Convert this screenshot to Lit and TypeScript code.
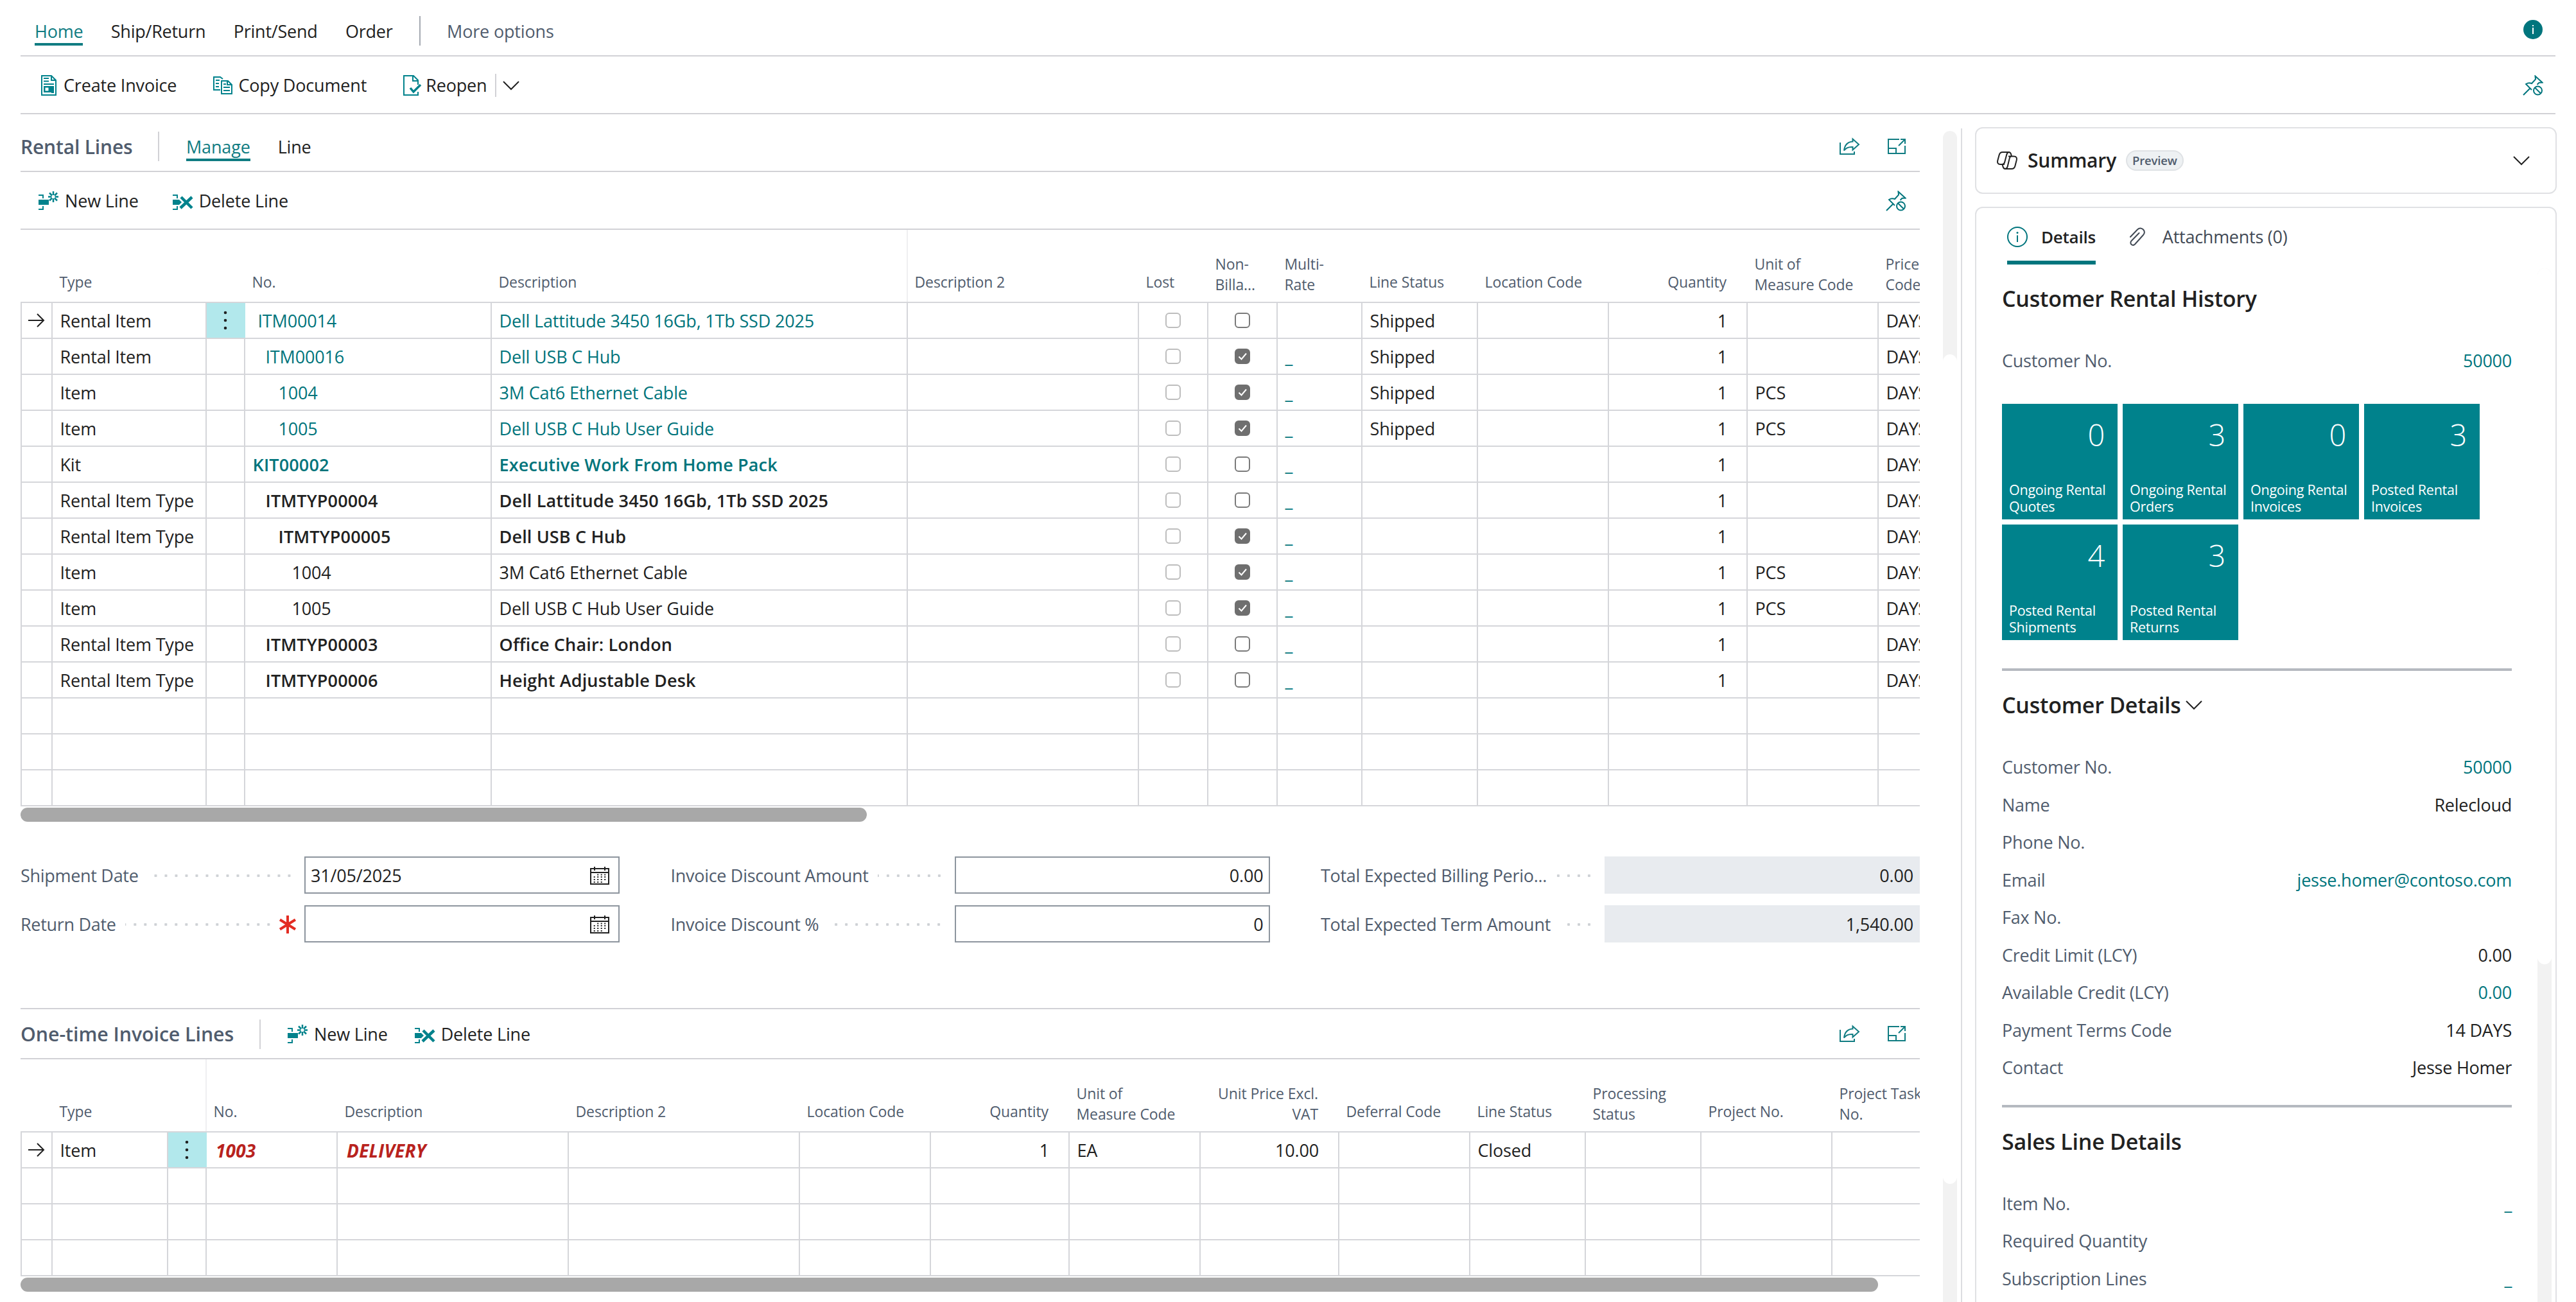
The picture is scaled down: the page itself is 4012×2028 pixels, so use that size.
import {LitElement, css, html, nothing, svg} from 'lit';
import type {TemplateResult} from 'lit';
import {customElement, property} from 'lit/decorators.js';
import {classMap} from 'lit/directives/class-map.js';

interface Column {
  title: string;
  right?: boolean;
  frozen?: boolean;
}

interface RentalLine {
  type: string;
  no: string;
  indent: number;
  description: string;
  link?: boolean;
  bold?: boolean;
  nonBillable?: boolean;
  multiRate?: boolean;
  status?: string;
  unit?: string;
}

interface Fact {
  label: string;
  value?: string;
  link?: boolean;
}

const icons: Record<string, TemplateResult> = {
  invoice: html`<svg width="26" height="32" viewBox="0 0 26 32" fill="none" stroke="currentColor" stroke-width="2">
    <path d="M1 1h15l7 7v23H1z M16 1v7h7 M4 5h8 M4 9.500h8 M4 14h16" />
    <path d="M4 17h16v11h-4v-1H4z" fill="currentColor" stroke="none" /><path d="M6.500 19.500h5v5h-5z" fill="#fff" stroke="none" />
  </svg>`,
  copy: html`<svg width="30" height="28" viewBox="0 0 30 28" fill="none" stroke="currentColor" stroke-width="2">
    <path d="M11 21H1V1h10l4 3 M4 6h6 M4 11h5 M4 16h5 M13 7h10l6 6v14H13z M22 7v6h7 M16 12h4 M16 17h10 M16 22h10" />
  </svg>`,
  reopen: html`<svg width="26" height="32" viewBox="0 0 26 32" overflow="visible" fill="none" stroke="currentColor" stroke-width="2">
    <path d="M23 15V8l-7-7H1v30h22v-5 M15 1v8h8" /><path d="M11 20l5 6L27 15" stroke-width="3.500" />
  </svg>`,
  newLine: html`<svg width="32" height="28" viewBox="0 0 32 28" overflow="visible" fill="none" stroke="currentColor" stroke-width="2">
    <path d="M0 5h7v5 M0 27h7v-5" /><path d="M0 12h16v8H0z" fill="currentColor" stroke="none" />
    <path d="M23 -1v6 M23 10v6 M15 7.500h5.500 M25.500 7.500h5.500 M17 1.500l4 4 M29 1.500l-4 4 M17 13.500l4-4 M29 13.500l-4-4" stroke-width="2.500" />
  </svg>`,
  deleteLine: html`<svg width="32" height="28" viewBox="0 0 32 28" fill="none" stroke="currentColor" stroke-width="2">
    <path d="M0 5h7v5 M0 27h7v-5" /><path d="M0 12h10l4 4-4 4H0z" fill="currentColor" stroke="none" />
    <path d="M13 8l17 17 M30 8L12 25" stroke-width="4.500" />
  </svg>`,
  share: html`<svg width="32" height="28" viewBox="0 0 32 28" fill="none" stroke="currentColor" stroke-width="2">
    <path d="M1 8v18h22v-4" /><path d="M20.500 2.500L30 11l-9.500 8.500V15C14 14.500 10 16 7 20.500 8 12 12.500 7 20.500 6.500z" />
  </svg>`,
  expand: html`<svg width="28" height="24" viewBox="0 0 28 24" fill="none" stroke="currentColor" stroke-width="2">
    <path d="M18 1H1v22h26V11 M1 15h12v8 M17 11L26.500 1.500 M20 1h7v7" />
  </svg>`,
  unpin: html`<svg width="32" height="32" viewBox="0 0 32 32" fill="none" stroke="currentColor" stroke-width="2">
    <path d="M1 31l10.500-10.500 M14 23l-9-9c3-2 6-2 9-1l6-6.500-.5-5L30.500 11.500l-5 .2-3 3" />
    <circle cx="23.500" cy="24" r="6.500" /><path d="M19 19.500l9 9" />
  </svg>`,
  info: html`<svg width="32" height="32" viewBox="0 0 32 32" fill="none" stroke="currentColor" stroke-width="2">
    <circle cx="16" cy="16" r="15" /><path d="M16 13.500v10.500" /><circle cx="16" cy="9.500" r="1.500" fill="currentColor" stroke="none" />
  </svg>`,
  infoFilled: html`<svg width="30" height="30" viewBox="0 0 30 30">
    <circle cx="15" cy="15" r="15" fill="currentColor" /><path d="M14 12h2v10h-2z M14 8h2v2h-2z" fill="#fff" />
  </svg>`,
  clip: html`<svg width="28" height="30" viewBox="0 0 28 30" fill="none" stroke="currentColor" stroke-width="2" stroke-linecap="round">
    <path d="M2 15L13 3.500c3-3 6.500-2.500 9 0s2.500 6 0 8.500L9 26.500c-1.800 1.800-4 1.500-5.500.2s-1.600-4 .2-5.700L15.500 9" />
  </svg>`,
  copilot: html`<svg width="32" height="28" viewBox="0 0 32 28" fill="none" stroke="currentColor" stroke-width="2" stroke-linejoin="round">
    <path d="M12 20H5.500C1.500 20 .5 17.500 1.300 14L3.600 5.500C4.300 2.700 6 1 9 1h10c-2 0-3 1-3.700 3.800L12.200 16.500C11.600 19 10.500 20 8.500 20" />
    <path d="M18 7.500h8.500c4 0 5 2.500 4.200 6L28.400 22.500C27.700 25.300 26 27 23 27H13c2 0 3-1 3.700-3.800L19.500 11.500C20 9 21 7.500 23 7.500" />
    <path d="M18.500 1c2 0 3 1 3.600 3.200L23 7.500 M8.500 20l1 3.500C10.100 26 11.200 27 13 27" />
  </svg>`,
  calendar: html`<svg width="30" height="28" viewBox="0 0 30 28" fill="none" stroke="currentColor" stroke-width="2">
    <path d="M1 3h28v24H1z M1 9h28 M7 0v6 M23 0v6" />
    <path d="M11.200 12.500h14 M5.700 16h20 M5.700 20h20 M5.700 24h14" stroke-dasharray="2 3.500" />
  </svg>`,
  chevron: html`<svg width="26" height="16" viewBox="0 0 26 16" fill="none" stroke="currentColor" stroke-width="2">
    <path d="M1 2l12 12L25 2" />
  </svg>`,
  arrow: html`<svg width="26" height="22" viewBox="0 0 26 22" fill="none" stroke="currentColor" stroke-width="2">
    <path d="M0 11h24 M14 1l10 10-10 10" />
  </svg>`,
  more: html`<svg width="6" height="30" viewBox="0 0 6 30" fill="currentColor">
    ${[3, 15, 27].map(y => svg`<circle cx="3" cy=${y} r="2.300" />`)}
  </svg>`,
  required: html`<svg width="28" height="28" viewBox="0 0 28 28" fill="none" stroke="#e32c22" stroke-width="4">
    <path d="M14 0v28 M2 6.500l24 15 M26 6.500l-24 15" />
  </svg>`
};

const shared = css`
  * {
    box-sizing: border-box;
  }
  svg {
    display: block;
    flex: none;
  }
  .teal {
    color: #00757d;
  }
`;

@customElement('bc-check')
export class Check extends LitElement {
  static styles = css`
    :host {
      display: block;
    }
    .box {
      display: flex;
      box-sizing: border-box;
      width: 24px;
      height: 24px;
      border: 2px solid #7a7a7a;
      border-radius: 6px;
    }
    .dim {
      border-color: #bdbdbd;
    }
    .on {
      background: #6f6f6f;
      border-color: #6f6f6f;
    }
    svg {
      display: block;
      flex: none;
    }
  `;

  @property({type: Boolean})
  checked = false;

  @property({type: Boolean})
  dim = false;

  render() {
    return html`<span class=${classMap({box: true, on: this.checked, dim: this.dim})}>
      ${this.checked
        ? html`<svg width="20" height="20" viewBox="0 0 20 20" fill="none" stroke="#fff" stroke-width="2"><path d="M4.500 10.500l4 4 7.500-9" /></svg>`
        : nothing}</span>`;
  }
}

@customElement('bc-field')
export class Field extends LitElement {
  static styles = [
    shared,
    css`
      :host {
        display: flex;
        align-items: center;
        height: 58px;
      }
      .label {
        display: flex;
        align-items: center;
        width: 442px;
        padding: 2px 16px 0 0;
        color: #505c6d;
        letter-spacing: -0.3px;
      }
      .text {
        max-width: 380px;
        overflow: hidden;
        text-overflow: ellipsis;
        white-space: nowrap;
      }
      .dots {
        flex: 1;
        height: 4px;
        margin-left: 14px;
        background: radial-gradient(circle at center, #cfd2d6 2px, transparent 2.500px) right center / 16px 4px repeat-x;
      }
      .star {
        margin: 0 -4px 0 8px;
      }
      .input {
        display: flex;
        flex: 1;
        align-items: center;
        justify-content: space-between;
        height: 58px;
        padding: 2px 14px 0 8px;
        border: 2px solid #8d959e;
        color: #212121;
      }
      .amount {
        justify-content: flex-end;
        padding-right: 8px;
      }
      .readonly {
        border-color: #e8ebef;
        background: #e8ebef;
      }
    `
  ];

  @property()
  label = '';

  @property()
  value = '';

  @property()
  kind = 'amount';

  @property({type: Boolean})
  required = false;

  render() {
    return html`
      <div class="label">
        <span class="text">${this.label}</span><span class="dots"></span>
        ${this.required ? html`<span class="star">${icons.required}</span>` : nothing}
      </div>
      <div class=${classMap({input: true, amount: this.kind !== 'date', readonly: this.kind === 'total'})}>
        <span>${this.value}</span>${this.kind === 'date' ? icons.calendar : nothing}
      </div>
    `;
  }
}

@customElement('app-root')
export class App extends LitElement {
  static styles = [
    shared,
    css`
      :host {
        display: block;
        width: 4012px;
        height: 2028px;
        overflow: hidden;
        background: #fff;
        color: #212121;
        font: 27px/36px 'Open Sans', 'Noto Sans', sans-serif;
        letter-spacing: -0.17px;
      }
      .bar {
        display: flex;
        margin: 0 32px;
        border-bottom: 2px solid #d2d2d6;
      }
      .menu {
        align-items: flex-start;
        height: 88px;
        padding: 31px 20px 0 22px;
      }
      .tab {
        height: 40px;
        margin-right: 43px;
      }
      .menu .tab {
        margin-right: 43.500px;
        letter-spacing: -0.25px;
      }
      .tab.current {
        border-bottom: 4px solid #107c82;
        color: #107c82;
      }
      .sep {
        width: 2px;
        height: 46px;
        background: #d2d2d6;
      }
      .menu .sep {
        margin: -6px 41px 0 -2px;
        background: #a5aab2;
      }
      .options {
        color: #505c6d;
      }
      .push {
        margin-left: auto;
      }
      .actions {
        align-items: center;
        height: 90px;
        padding: 2px 19px 0 32px;
      }
      .action {
        display: flex;
        align-items: center;
        margin-right: 57px;
      }
      .action svg {
        margin-right: 9px;
        color: #00828c;
      }
      .actions .sep {
        height: 36px;
        margin: 0 10px 0 -44px;
      }
      .body {
        display: flex;
        height: 1850px;
        padding-left: 32px;
      }
      .main {
        width: 2958px;
      }
      .main .bar {
        margin: 0;
      }
      .head {
        align-items: flex-start;
        height: 90px;
        padding-top: 33px;
      }
      .title {
        width: 174px;
        color: #505c6d;
        font-size: 30px;
        font-weight: 600;
        white-space: nowrap;
      }
      .head .sep {
        margin: -6px 42px 0 40px;
      }
      .tools {
        display: flex;
        gap: 43px;
        align-items: center;
        height: 36px;
        margin: -1px 22px 0 auto;
        color: #107c82;
      }
      .lineActions {
        align-items: center;
        height: 90px;
        padding: 2px 21px 0 28px;
      }
      .lineActions .action {
        margin-right: 53px;
      }
      .invoiceHead .action {
        margin-right: 42px;
      }
      .invoiceHead {
        align-items: center;
        height: 80px;
        padding-top: 1px;
        border-top: 2px solid #d2d2d6;
      }
      .invoiceHead .title {
        width: 332px;
        font-size: 30.300px;
        letter-spacing: -0.05px;
      }
      .invoiceHead .sep {
        margin: 0 42px 0 40px;
      }
      .row {
        display: grid;
        width: 2958px;
        height: 56px;
        overflow: hidden;
        border-top: 2px solid #d5d6da;
        border-left: 2px solid #d5d6da;
      }
      .rental .row {
        grid-template-columns: 48px 240px 60px 384px 648px 360px 108px 108px 132px 180px 204px 216px 204px 100px;
      }
      .invoice .row {
        grid-template-columns: 48px 180px 60px 204px 360px 360px 204px 216px 204px 216px 204px 180px 180px 204px 200px;
      }
      .grid {
        border-bottom: 2px solid #d5d6da;
      }
      .grid .row.header {
        height: 112px;
        border-color: transparent;
        border-top: 0;
        color: #505c6d;
        font-size: 23px;
        line-height: 32px;
        letter-spacing: -0.1px;
      }
      .header .cell {
        align-items: flex-end;
        padding: 0 0 15px 10.500px;
        border-color: transparent;
        white-space: pre-line;
      }
      .header .cell.right {
        padding-right: 31px;
      }
      .header .cell.double {
        padding-bottom: 11px;
      }
      .header .cell.frozen {
        border-color: #efeff1;
      }
      .cell {
        display: flex;
        align-items: center;
        padding: 2px 0 0 11.500px;
        border-right: 2px solid #d5d6da;
        white-space: nowrap;
      }
      .right {
        justify-content: flex-end;
        padding-right: 30px;
        text-align: right;
      }
      .center {
        justify-content: center;
        padding: 0;
      }
      .dots {
        background: #b2e8ec;
        border-color: #b2e8ec;
      }
      .price {
        letter-spacing: -0.7px;
      }
      .link {
        color: #00747b;
      }
      .strong {
        font-size: 27px;
        font-weight: 600;
        letter-spacing: 0.15px;
      }
      .alert {
        padding-left: 14px;
        color: #b8221d;
        font-size: 28px;
        font-style: italic;
        font-weight: 700;
        letter-spacing: 0.2px;
      }
      .indent {
        padding-left: var(--indent);
      }
      .scroll {
        height: 22px;
        margin-top: 2px;
        border-radius: 11px;
        background: #a8a8a8;
      }
      .rentalScroll {
        width: 1318px;
      }
      .invoiceScroll {
        width: 2893px;
      }
      .fields {
        display: grid;
        grid-template-columns: repeat(3, 933px);
        gap: 18px 79.500px;
        margin: 54px 0 102px;
      }
      .track {
        width: 22px;
        background: #f2f2f2;
        border-radius: 11px 11px 0 0;
      }
      .thumb {
        background: #fff;
        border-radius: 11px;
      }
      .mainTrack {
        height: 1824px;
        margin: 26px 6px 0 36px;
        padding-top: 348px;
      }
      .mainTrack .thumb {
        height: 1292px;
      }
      .divider {
        width: 2px;
        margin: 22px 20px 0 0;
        background: #dcdde1;
      }
      .side {
        display: flex;
        flex-direction: column;
        gap: 20px;
        width: 906px;
        padding-top: 20px;
      }
      .card {
        flex: none;
        border: 2px solid #e0e1e4;
        border-radius: 12px;
      }
      .summary {
        display: flex;
        align-items: center;
        height: 104px;
        padding: 0 40px 0 32px;
      }
      .summary b {
        margin: 0 15px 0 16px;
        font-size: 30px;
        font-weight: 600;
      }
      .pill {
        height: 32px;
        padding: 0 8px;
        border: 2px solid #dfe2e5;
        border-radius: 16px;
        background: #eef1f3;
        color: #505c6d;
        font-size: 18.500px;
        font-weight: 600;
        line-height: 28px;
      }
      .details {
        display: flex;
        justify-content: space-between;
        height: 1740px;
        padding: 0 6px 0 40px;
      }
      .facts {
        width: 794px;
        letter-spacing: -0.25px;
      }
      .tabs {
        display: flex;
        height: 88px;
        padding-left: 8px;
      }
      .sideTab {
        display: flex;
        gap: 21px;
        align-items: center;
        height: 88px;
        margin-right: 52px;
        padding: 22px 0 20px;
        color: #424a55;
      }
      .sideTab.active {
        color: #212121;
        font-size: 26px;
        font-weight: 600;
        background: linear-gradient(#00757d, #00757d) bottom / 100% 6px no-repeat;
      }
      .sideTab + .sideTab {
        gap: 24px;
      }
      h2 {
        display: flex;
        gap: 7px;
        align-items: center;
        height: 44px;
        margin: 31px 0 46px;
        font-size: 34px;
        font-weight: 600;
        letter-spacing: -0.25px;
      }
      .fact {
        display: flex;
        justify-content: space-between;
        height: 58.500px;
        line-height: 58.500px;
      }
      .fact span:first-child {
        color: #505c6d;
      }
      hr {
        height: 4px;
        margin: 0;
        border: 0;
        background: #b5b9c0;
      }
      .fact + hr {
        margin-top: 28px;
      }
      .tiles {
        display: grid;
        grid-template-columns: repeat(4, 180px);
        gap: 8px;
        margin: 37.500px 0 44px;
      }
      .tile {
        display: flex;
        flex-direction: column;
        justify-content: space-between;
        height: 180px;
        padding: 16px 0 7px 11px;
        background: #00828c;
        color: #fff;
        font-size: 21.500px;
        line-height: 26px;
        white-space: pre-line;
      }
      .count {
        padding-right: 20px;
        font-size: 47px;
        font-weight: 300;
        line-height: 64px;
        text-align: right;
      }
      .sideTrack {
        height: 1620px;
        margin-top: 94px;
      }
      .sideTrack .thumb {
        height: 1084px;
      }
    `
  ];

  rentalColumns: Array<Column> = [
    {title: ''},
    {title: 'Type'},
    {title: ''},
    {title: 'No.'},
    {title: 'Description', frozen: true},
    {title: 'Description 2'},
    {title: 'Lost'},
    {title: 'Non-\nBilla...'},
    {title: 'Multi-\nRate'},
    {title: 'Line Status'},
    {title: 'Location Code'},
    {title: 'Quantity', right: true},
    {title: 'Unit of\nMeasure Code'},
    {title: 'Price\nCode'}
  ];

  invoiceColumns: Array<Column> = [
    {title: ''},
    {title: 'Type'},
    {title: '', frozen: true},
    {title: 'No.'},
    {title: 'Description'},
    {title: 'Description 2'},
    {title: 'Location Code'},
    {title: 'Quantity', right: true},
    {title: 'Unit of\nMeasure Code'},
    {title: 'Unit Price Excl.\nVAT', right: true},
    {title: 'Deferral Code'},
    {title: 'Line Status'},
    {title: 'Processing\nStatus'},
    {title: 'Project No.'},
    {title: 'Project Task\nNo.'}
  ];

  lines: Array<RentalLine> = [
    {type: 'Rental Item', no: 'ITM00014', indent: 8, description: 'Dell Lattitude 3450 16Gb, 1Tb SSD 2025', link: true, status: 'Shipped'},
    {type: 'Rental Item', no: 'ITM00016', indent: 20, description: 'Dell USB C Hub', link: true, nonBillable: true, multiRate: true, status: 'Shipped'},
    {type: 'Item', no: '1004', indent: 40, description: '3M Cat6 Ethernet Cable', link: true, nonBillable: true, multiRate: true, status: 'Shipped', unit: 'PCS'},
    {type: 'Item', no: '1005', indent: 40, description: 'Dell USB C Hub User Guide', link: true, nonBillable: true, multiRate: true, status: 'Shipped', unit: 'PCS'},
    {type: 'Kit', no: 'KIT00002', indent: 0, description: 'Executive Work From Home Pack', link: true, bold: true, multiRate: true},
    {type: 'Rental Item Type', no: 'ITMTYP00004', indent: 20, description: 'Dell Lattitude 3450 16Gb, 1Tb SSD 2025', bold: true, multiRate: true},
    {type: 'Rental Item Type', no: 'ITMTYP00005', indent: 40, description: 'Dell USB C Hub', bold: true, nonBillable: true, multiRate: true},
    {type: 'Item', no: '1004', indent: 61, description: '3M Cat6 Ethernet Cable', nonBillable: true, multiRate: true, unit: 'PCS'},
    {type: 'Item', no: '1005', indent: 61, description: 'Dell USB C Hub User Guide', nonBillable: true, multiRate: true, unit: 'PCS'},
    {type: 'Rental Item Type', no: 'ITMTYP00003', indent: 20, description: 'Office Chair: London', bold: true, multiRate: true},
    {type: 'Rental Item Type', no: 'ITMTYP00006', indent: 20, description: 'Height Adjustable Desk', bold: true, multiRate: true}
  ];

  tiles: Array<[string, string]> = [
    ['0', 'Ongoing Rental\nQuotes'],
    ['3', 'Ongoing Rental\nOrders'],
    ['0', 'Ongoing Rental\nInvoices'],
    ['3', 'Posted Rental\nInvoices'],
    ['4', 'Posted Rental\nShipments'],
    ['3', 'Posted Rental\nReturns']
  ];

  customer: Array<Fact> = [
    {label: 'Customer No.', value: '50000', link: true},
    {label: 'Name', value: 'Relecloud'},
    {label: 'Phone No.'},
    {label: 'Email', value: 'jesse.homer@contoso.com', link: true},
    {label: 'Fax No.'},
    {label: 'Credit Limit (LCY)', value: '0.00'},
    {label: 'Available Credit (LCY)', value: '0.00', link: true},
    {label: 'Payment Terms Code', value: '14 DAYS'},
    {label: 'Contact', value: 'Jesse Homer'}
  ];

  salesLine: Array<Fact> = [
    {label: 'Item No.', value: '_', link: true},
    {label: 'Required Quantity'},
    {label: 'Subscription Lines', value: '_', link: true}
  ];

  action(icon: string, label: string) {
    return html`<span class="action">${icons[icon]}${label}</span>`;
  }

  header(columns: Array<Column>) {
    return html`<div class="row header">${columns.map(
      c => html`<div class=${classMap({cell: true, right: !!c.right, frozen: !!c.frozen, double: c.title.includes('\n')})}>${c.title}</div>`
    )}</div>`;
  }

  rentalRow(line: RentalLine, index: number) {
    const text = classMap({cell: true, link: !!line.link, strong: !!line.bold});
    return html`
      <div class="row">
        <div class="cell center">${index === 0 ? icons.arrow : nothing}</div>
        <div class="cell">${line.type}</div>
        <div class=${classMap({cell: true, center: true, dots: index === 0})}>${index === 0 ? icons.more : nothing}</div>
        <div class=${text}><span class="indent" style="--indent: ${line.indent}px">${line.no}</span></div>
        <div class=${text}>${line.description}</div>
        <div class="cell"></div>
        <div class="cell center"><bc-check dim></bc-check></div>
        <div class="cell center"><bc-check ?checked=${line.nonBillable}></bc-check></div>
        <div class="cell link">${line.multiRate ? '_' : ''}</div>
        <div class="cell">${line.status}</div>
        <div class="cell"></div>
        <div class="cell right">1</div>
        <div class="cell">${line.unit}</div>
        <div class="cell price">DAYS</div>
      </div>
    `;
  }

  emptyRows(count: number, columns: Array<Column>) {
    return Array.from({length: count}, () => html`<div class="row">${columns.map(() => html`<div class="cell"></div>`)}</div>`);
  }

  facts(facts: Array<Fact>) {
    return facts.map(
      f => html`<div class="fact"><span>${f.label}</span><span class=${f.link ? 'teal' : ''}>${f.value}</span></div>`
    );
  }

  renderRental() {
    return html`
      <div class="bar head">
        <span class="title">Rental Lines</span><span class="sep"></span>
        <span class="tab current">Manage</span><span class="tab">Line</span>
        <span class="tools">${icons.share}${icons.expand}</span>
      </div>
      <div class="bar lineActions">
        ${this.action('newLine', 'New Line')}${this.action('deleteLine', 'Delete Line')}
        <span class="push teal">${icons.unpin}</span>
      </div>
      <div class="grid rental">
        ${this.header(this.rentalColumns)}
        ${this.lines.map((line, i) => this.rentalRow(line, i))}
        ${this.emptyRows(3, this.rentalColumns)}
      </div>
      <div class="scroll rentalScroll"></div>
      <div class="fields">
        <bc-field label="Shipment Date" value="31/05/2025" kind="date"></bc-field>
        <bc-field label="Invoice Discount Amount" value="0.00"></bc-field>
        <bc-field label="Total Expected Billing Perio..." value="0.00" kind="total"></bc-field>
        <bc-field label="Return Date" kind="date" required></bc-field>
        <bc-field label="Invoice Discount %" value="0"></bc-field>
        <bc-field label="Total Expected Term Amount" value="1,540.00" kind="total"></bc-field>
      </div>
    `;
  }

  renderInvoice() {
    return html`
      <div class="bar invoiceHead">
        <span class="title">One-time Invoice Lines</span><span class="sep"></span>
        ${this.action('newLine', 'New Line')}${this.action('deleteLine', 'Delete Line')}
        <span class="tools">${icons.share}${icons.expand}</span>
      </div>
      <div class="grid invoice">
        ${this.header(this.invoiceColumns)}
        <div class="row">
          <div class="cell center">${icons.arrow}</div>
          <div class="cell">Item</div>
          <div class="cell center dots">${icons.more}</div>
          <div class="cell alert">1003</div>
          <div class="cell alert">DELIVERY</div>
          <div class="cell"></div>
          <div class="cell"></div>
          <div class="cell right">1</div>
          <div class="cell">EA</div>
          <div class="cell right">10.00</div>
          <div class="cell"></div>
          <div class="cell">Closed</div>
          <div class="cell"></div>
          <div class="cell"></div>
          <div class="cell"></div>
        </div>
        ${this.emptyRows(3, this.invoiceColumns)}
      </div>
      <div class="scroll invoiceScroll"></div>
    `;
  }

  renderSide() {
    return html`
      <div class="card summary">
        ${icons.copilot}<b>Summary</b><span class="pill">Preview</span><span class="push">${icons.chevron}</span>
      </div>
      <div class="card details">
        <div class="facts">
          <div class="tabs">
            <span class="sideTab active"><span class="teal">${icons.info}</span>Details</span>
            <span class="sideTab">${icons.clip}Attachments (0)</span>
          </div>
          <h2>Customer Rental History</h2>
          ${this.facts([{label: 'Customer No.', value: '50000', link: true}])}
          <div class="tiles">
            ${this.tiles.map(([count, label]) => html`<div class="tile"><div class="count">${count}</div><div>${label}</div></div>`)}
          </div>
          <hr />
          <h2>Customer Details${icons.chevron}</h2>
          ${this.facts(this.customer)}
          <hr />
          <h2>Sales Line Details</h2>
          ${this.facts(this.salesLine)}
        </div>
        <div class="track sideTrack"><div class="thumb"></div></div>
      </div>
    `;
  }

  render() {
    return html`
      <div class="bar menu">
        <span class="tab current">Home</span><span class="tab">Ship/Return</span><span class="tab">Print/Send</span><span class="tab">Order</span>
        <span class="sep"></span><span class="options">More options</span>
        <span class="push teal">${icons.infoFilled}</span>
      </div>
      <div class="bar actions">
        ${this.action('invoice', 'Create Invoice')}
        ${this.action('copy', 'Copy Document')}
        ${this.action('reopen', 'Reopen')}
        <span class="sep"></span>${icons.chevron}
        <span class="push teal">${icons.unpin}</span>
      </div>
      <div class="body">
        <div class="main">${this.renderRental()}${this.renderInvoice()}</div>
        <div class="track mainTrack"><div class="thumb"></div></div>
        <div class="divider"></div>
        <div class="side">${this.renderSide()}</div>
      </div>
    `;
  }
}
